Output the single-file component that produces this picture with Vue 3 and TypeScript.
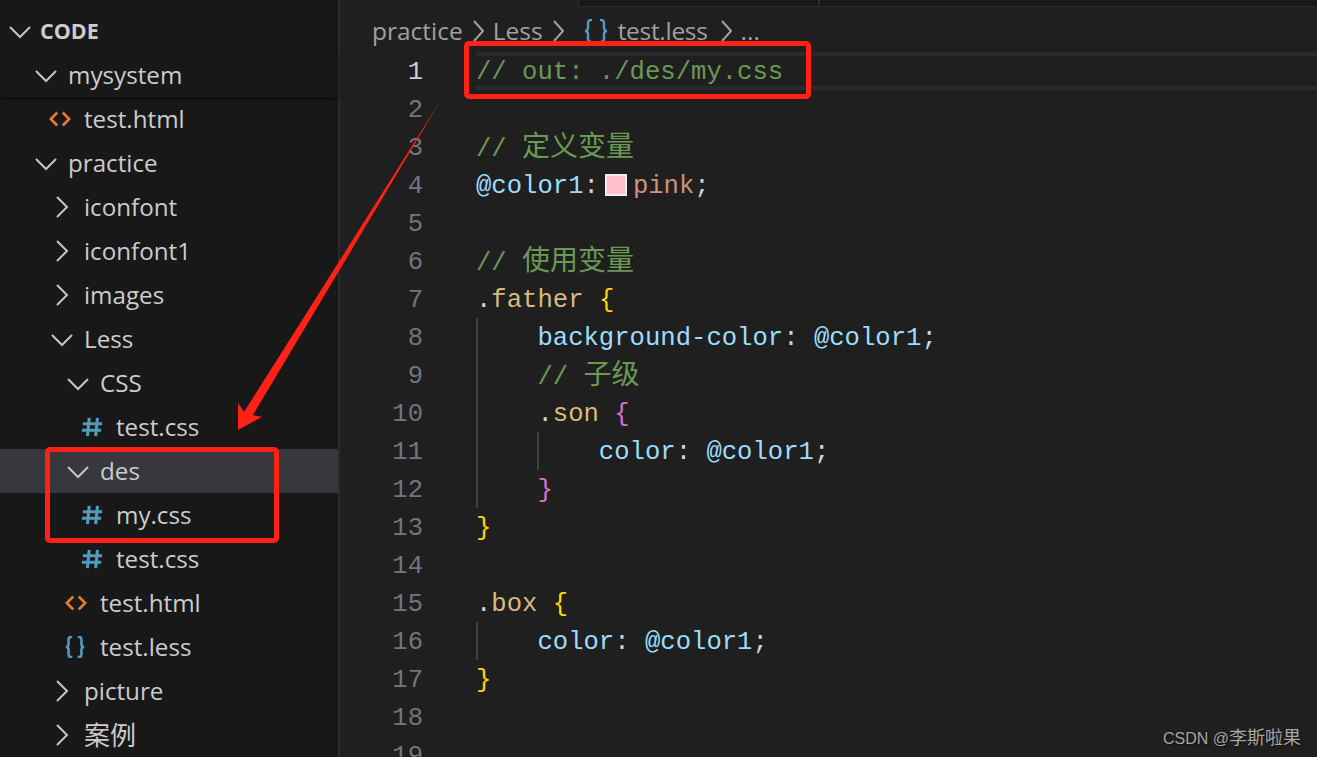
<script setup lang="ts">
type Kind = 'open' | 'closed' | 'html' | 'css' | 'less' | 'none'
interface Row { name: string; depth: number; kind: Kind; head?: boolean; sticky?: boolean; selected?: boolean; cjk?: boolean }
const rows: Row[] = [
  { name: 'CODE', depth: 0, kind: 'open', head: true },
  { name: 'mysystem', depth: 1, kind: 'open', sticky: true },
  { name: 'test.html', depth: 2, kind: 'html' },
  { name: 'practice', depth: 1, kind: 'open' },
  { name: 'iconfont', depth: 2, kind: 'closed' },
  { name: 'iconfont1', depth: 2, kind: 'closed' },
  { name: 'images', depth: 2, kind: 'closed' },
  { name: 'Less', depth: 2, kind: 'open' },
  { name: 'CSS', depth: 3, kind: 'open' },
  { name: 'test.css', depth: 4, kind: 'css' },
  { name: 'des', depth: 3, kind: 'open', selected: true },
  { name: 'my.css', depth: 4, kind: 'css' },
  { name: 'test.css', depth: 4, kind: 'css' },
  { name: 'test.html', depth: 3, kind: 'html' },
  { name: 'test.less', depth: 3, kind: 'less' },
  { name: 'picture', depth: 2, kind: 'closed' },
  { name: '案例', depth: 2, kind: 'closed', cjk: true },
]
type Tok = { t: string; c: string }
interface Line { toks: Tok[]; guides: number; swatch?: boolean }
const L = (guides: number, ...toks: [string, string][]): Line => ({ guides, toks: toks.map(([t, c]) => ({ t, c })) })
const lines: Line[] = [
  L(0, ['// out: ./des/my.css', 'com']),
  L(0),
  L(0, ['// ', 'com'], ['定义变量', 'com cjk']),
  { guides: 0, swatch: true, toks: [] },
  L(0),
  L(0, ['// ', 'com'], ['使用变量', 'com cjk']),
  L(0, ['.', 'txt'], ['father', 'sel'], [' ', 'txt'], ['{', 'gold']),
  L(1, ['    background-color', 'var'], [': ', 'txt'], ['@color1', 'var'], [';', 'txt']),
  L(1, ['    // ', 'com'], ['子级', 'com cjk']),
  L(1, ['    .', 'txt'], ['son', 'sel'], [' ', 'txt'], ['{', 'orchid']),
  L(2, ['        color', 'var'], [': ', 'txt'], ['@color1', 'var'], [';', 'txt']),
  L(1, ['    ', 'txt'], ['}', 'orchid']),
  L(0, ['}', 'gold']),
  L(0),
  L(0, ['.', 'txt'], ['box', 'sel'], [' ', 'txt'], ['{', 'gold']),
  L(1, ['    color', 'var'], [': ', 'txt'], ['@color1', 'var'], [';', 'txt']),
  L(0, ['}', 'gold']),
  L(0),
  L(0),
]
const crumbs = ['practice', 'Less']
</script>

<template>
  <div class="screen">
    <aside class="side">
      <div
        v-for="(r, i) in rows"
        :key="i"
        class="row"
        :class="{ head: r.head, sticky: r.sticky, selected: r.selected }"
      >
        <span class="name-wrap" :style="{ paddingLeft: (r.depth === 0 ? 40 : 52 + r.depth * 16) + 'px' }">
          <svg v-if="r.kind === 'open'" class="ico chev" viewBox="0 0 24 24"><path d="M2 8l10 10L22 8" /></svg>
          <svg v-else-if="r.kind === 'closed'" class="ico chev" viewBox="0 0 24 24"><path d="M7 2l10 10L7 22" /></svg>
          <svg v-else-if="r.kind === 'html'" class="ico file html" viewBox="0 0 24 24"><path d="M9 5l-7 7 7 7M15 5l7 7-7 7" /></svg>
          <svg v-else-if="r.kind === 'css'" class="ico file css" viewBox="0 0 24 24"><path d="M9 2L7 22M18 2l-2 20M2 8.500h21M1 15.500h21" /></svg>
          <svg v-else class="ico file less" viewBox="0 0 24 24"><path d="M9 1H7.500Q5 1 5 4v5q0 3-3 3 3 0 3 3v5q0 3 2.500 3H9M15 1h1.500Q19 1 19 4v5q0 3 3 3-3 0-3 3v5q0 3-2.500 3H15" /></svg>
          <span class="name" :class="{ zh: r.cjk }">{{ r.name }}</span>
        </span>
      </div>
    </aside>

    <main class="editor">
      <div class="tabs">
        <div class="tab"></div>
        <div class="tab rest"></div>
      </div>
      <div class="crumbs">
        <template v-for="c in crumbs" :key="c">
          <span>{{ c }}</span>
          <svg class="sep" viewBox="0 0 12 24"><path d="M2 2l9 10-9 10" /></svg>
        </template>
        <svg class="braces" viewBox="0 0 24 24"><path d="M8 1H6.800Q4 1 4 4v5q0 3-3 3 3 0 3 3v5q0 3 2.800 3H8M16 1h1.200Q20 1 20 4v5q0 3 3 3-3 0-3 3v5q0 3-2.800 3H16" /></svg>
        <span class="file-crumb">test.less</span>
        <svg class="sep" viewBox="0 0 12 24"><path d="M2 2l9 10-9 10" /></svg>
        <span>...</span>
      </div>
      <div class="code">
        <div v-for="(l, i) in lines" :key="i" class="line" :class="{ current: i === 0 }">
          <span class="num">{{ i + 1 }}</span>
          <div class="src">
            <i v-for="g in l.guides" :key="g" class="guide" :style="{ left: (g - 1) * 61.4 + 'px' }"></i>
            <template v-if="l.swatch">
              <span class="var">@color1</span><span class="txt">:</span><span class="swatch"></span><span class="val">pink</span><span class="txt">;</span>
            </template>
            <template v-else>
              <span v-for="(t, j) in l.toks" :key="j" :class="t.c">{{ t.t }}</span>
            </template>
          </div>
        </div>
      </div>
    </main>

    <div class="mark mark-a"></div>
    <div class="mark mark-b"></div>
    <svg class="arrow" viewBox="0 0 1317 757" width="1317" height="757">
      <polygon points="441,100 253,415 262,417 238,430 238,403 244,412" fill="#ff2116" />
    </svg>
    <div class="watermark">CSDN @<span class="wm-zh">李斯啦果</span></div>
  </div>
</template>

<style scoped>
.screen {
  position: relative;
  display: flex;
  width: 1317px;
  height: 757px;
  overflow: hidden;
  background: #1f1f1f;
}
.side {
  flex: 0 0 338px;
  box-sizing: border-box;
  padding-top: 9px;
  background: #181818;
  font-family: "Open Sans", "Noto Sans CJK SC", sans-serif;
  font-size: 24.2px;
  color: #cccccc;
}
.row {
  height: 44px;
  line-height: 44px;
  white-space: nowrap;
}
.row.head { font-weight: 700; font-size: 21.500px; }
.row.sticky {
  position: relative;
  z-index: 1;
  background: #181818;
  box-shadow: 0 2px 4px rgba(0, 0, 0, 0.55);
}
.row.selected { background: #37373d; }
.name-wrap { position: relative; display: block; }
.name.zh { font-size: 26px; }
.ico {
  position: absolute;
  top: 10px;
  width: 24px;
  height: 24px;
  fill: none;
  stroke-width: 2;
}
.chev { margin-left: -34px; stroke: #c5c5c5; }
.row.head .chev { margin-left: -32px; }
.file { width: 22px; height: 22px; top: 11px; stroke-width: 3; }
.file.html { stroke: #e37933; margin-left: -35px; }
.file.css { stroke: #519aba; stroke-width: 3.400; margin-left: -35px; }
.file.less { stroke: #519aba; stroke-width: 2.800; margin-left: -36px; }
.editor {
  flex: 1;
  min-width: 0;
  background: #1f1f1f;
  border-left: 2px solid #2b2b2b;
}
.tabs {
  display: flex;
  height: 7px;
  margin-left: 238px;
}
.tab {
  flex: 0 0 241px;
  box-sizing: border-box;
  background: #181818;
  border: 1px solid #2b2b2b;
  border-top: 0;
}
.tab.rest { flex: 1; border-right: 0; }
.crumbs {
  display: flex;
  align-items: center;
  height: 47px;
  margin-bottom: -2px;
  padding-left: 32px;
  font-family: "Open Sans", "Noto Sans CJK SC", sans-serif;
  font-size: 24.5px;
  color: #a0a0a0;
}
.sep {
  width: 12px;
  height: 24px;
  margin: 0 9px 0 9px;
  fill: none;
  stroke: #a0a0a0;
  stroke-width: 2;
}
.braces {
  width: 24px;
  height: 24px;
  margin: 0 10px 0 11px;
  fill: none;
  stroke: #519aba;
  stroke-width: 2.500;
}
.file-crumb { letter-spacing: -0.3px; margin-right: 3px; }
.code {
  font-family: "Liberation Mono", "Noto Sans CJK SC", monospace;
  font-size: 25.6px;
}
.line {
  display: flex;
  height: 38px;
  line-height: 42px;
  white-space: pre;
}
.num {
  flex: 0 0 83px;
  text-align: right;
  color: #6e7681;
}
.current .num { color: #cccccc; }
.src {
  position: relative;
  flex: 1;
  box-sizing: border-box;
  margin-left: 53px;
}
.current .src {
  height: 38px;
  border-top: 4px solid #2a2a2a;
  border-bottom: 4px solid #2a2a2a;
  line-height: 34px;
}
.guide {
  position: absolute;
  top: 0;
  bottom: 0;
  width: 2px;
  background: #404040;
}
.com { color: #6a9955; }
.var { color: #9cdcfe; }
.val { color: #ce9178; }
.sel { color: #d7ba7d; }
.txt { color: #d4d4d4; }
.gold { color: #ffd700; }
.orchid { color: #da70d6; }
.cjk { font-size: 28px; }
.swatch {
  display: inline-block;
  box-sizing: border-box;
  width: 22px;
  height: 22px;
  margin: 0 6px;
  vertical-align: -3px;
  background: #ffc0cb;
  border: 2px solid #eeeeee;
}
.mark {
  position: absolute;
  box-sizing: border-box;
  border: 5px solid #ff2116;
  border-radius: 5px;
}
.mark-a { left: 464px; top: 41px; width: 347px; height: 58px; }
.mark-b { left: 45px; top: 447px; width: 234px; height: 96px; }
.arrow { position: absolute; left: 0; top: 0; pointer-events: none; }
.watermark {
  position: absolute;
  right: 16px;
  top: 727px;
  font-family: "Liberation Sans", "Noto Sans CJK SC", sans-serif;
  font-size: 16px;
  line-height: 22px;
  color: #a5a5a5;
  text-shadow: 1px 1px 1px #111111;
}
.wm-zh { font-size: 18px; }
</style>
